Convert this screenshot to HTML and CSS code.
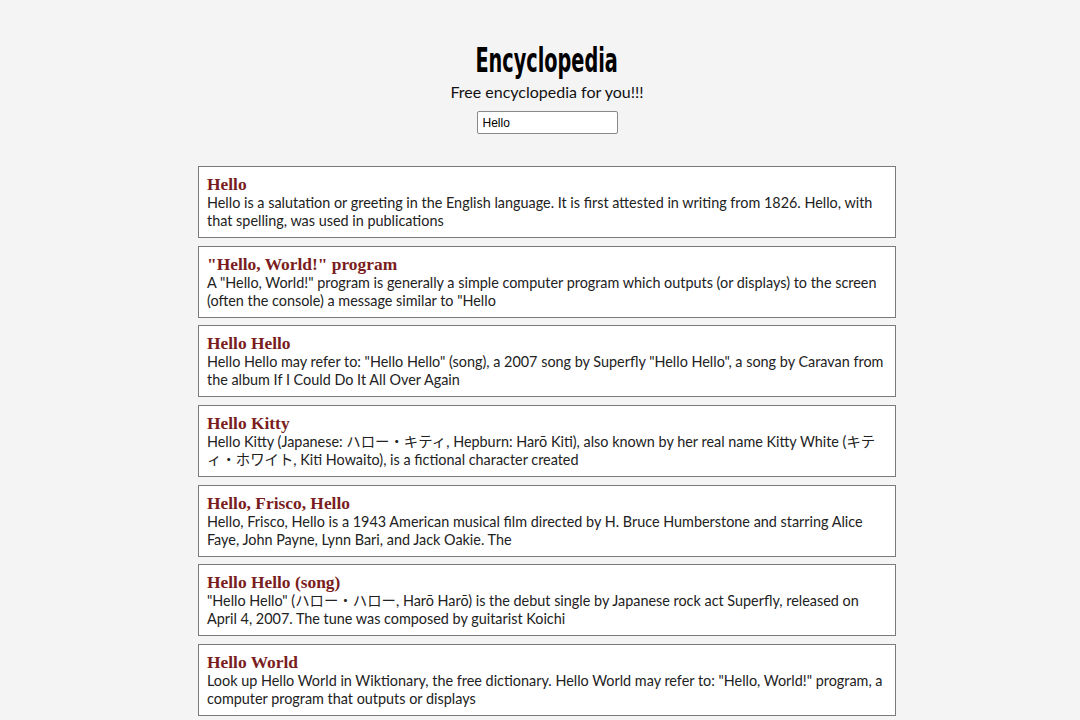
FILE: index.html
```html
<!DOCTYPE html>
<html>
<head>
<meta charset="utf-8">
<link rel="stylesheet" href="styles.css">
</head>
<body>
<div class="page">
  <header class="header">
    <h1 class="title">Encyclopedia</h1>
    <p class="subtitle">Free encyclopedia for you!!!</p>
    <input class="search" type="text" value="Hello">
  </header>
  <main class="results">
    <div class="card">
      <h2 class="card-title">Hello</h2>
      <p class="card-text">Hello is a salutation or greeting in the English language. It is first attested in writing from 1826. Hello, with that spelling, was used in publications</p>
    </div>
    <div class="card">
      <h2 class="card-title">"Hello, World!" program</h2>
      <p class="card-text">A "Hello, World!" program is generally a simple computer program which outputs (or displays) to the screen (often the console) a message similar to "Hello</p>
    </div>
    <div class="card">
      <h2 class="card-title">Hello Hello</h2>
      <p class="card-text">Hello Hello may refer to: "Hello Hello" (song), a 2007 song by Superfly "Hello Hello", a song by Caravan from the album If I Could Do It All Over Again</p>
    </div>
    <div class="card">
      <h2 class="card-title">Hello Kitty</h2>
      <p class="card-text">Hello Kitty (Japanese: ハロー・キティ, Hepburn: Harō Kiti), also known by her real name Kitty White (キティ・ホワイト, Kiti Howaito), is a fictional character created</p>
    </div>
    <div class="card">
      <h2 class="card-title">Hello, Frisco, Hello</h2>
      <p class="card-text">Hello, Frisco, Hello is a 1943 American musical film directed by H. Bruce Humberstone and starring Alice Faye, John Payne, Lynn Bari, and Jack Oakie. The</p>
    </div>
    <div class="card">
      <h2 class="card-title">Hello Hello (song)</h2>
      <p class="card-text">"Hello Hello" (ハロー・ハロー, Harō Harō) is the debut single by Japanese rock act Superfly, released on April 4, 2007. The tune was composed by guitarist Koichi</p>
    </div>
    <div class="card">
      <h2 class="card-title">Hello World</h2>
      <p class="card-text">Look up Hello World in Wiktionary, the free dictionary. Hello World may refer to: "Hello, World!" program, a computer program that outputs or displays</p>
    </div>
  </main>
</div>
</body>
</html>
```
FILE: styles.css
```css
html, body {
  margin: 0;
  padding: 0;
  background: #f5f4f5;
}
body {
  padding-left: 14px;
  font-family: "Lato", "Noto Sans CJK JP", sans-serif;
  color: #222;
}
.page {
  width: 698px;
  margin: 0 auto;
}
.header {
  display: flex;
  flex-direction: column;
  align-items: center;
  padding-top: 40px;
}
.title {
  margin: 0;
  font-family: "DejaVu Sans", sans-serif;
  font-weight: bold;
  font-size: 34px;
  line-height: 40px;
  color: #000;
  transform: scaleX(0.567);
}
.subtitle {
  margin: 2px 0 0;
  font-size: 16px;
  line-height: 20px;
  color: #111;
}
.search {
  margin-top: 9px;
  width: 141px;
  height: 23px;
  box-sizing: border-box;
  border: 1px solid #888;
  border-radius: 2px;
  background: #fff;
  padding: 1px 5px;
  font-family: "Liberation Sans", Arial, sans-serif;
  font-size: 12px;
  color: #000;
}
.results {
  margin-top: 32px;
  display: flex;
  flex-direction: column;
  gap: 7.67px;
}
.card {
  background: #fff;
  border: 1px solid #7a7a7a;
  padding: 8px 8px 7px 8px;
}
.card-title {
  margin: 0;
  font-family: "Liberation Serif", "Times New Roman", serif;
  font-weight: bold;
  font-size: 17.4px;
  line-height: 19px;
  color: #7a1d21;
}
.card-text {
  margin: 0;
  font-size: 14.4px;
  line-height: 18px;
  color: #222;
}
```
